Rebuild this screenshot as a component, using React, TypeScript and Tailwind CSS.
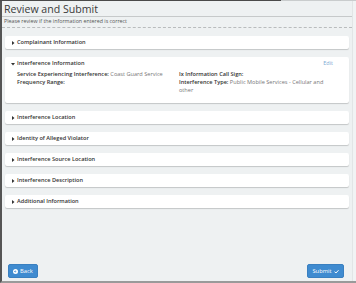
import { ReactNode } from "react";

const sections = [
  "Interference Location",
  "Identity of Alleged Violator",
  "Interference Source Location",
  "Interference Description",
  "Additional Information",
];

function Caret({ open }: { open?: boolean }) {
  return (
    <svg width="4" height="4" viewBox="0 0 4 4" className="mr-[2px] shrink-0">
      {open ? (
        <polygon points="0,1 4,1 2,3.5" fill="#333" />
      ) : (
        <polygon points="1,0 3.5,2 1,4" fill="#333" />
      )}
    </svg>
  );
}

function Card({ title, open, children }: { title: string; open?: boolean; children?: ReactNode }) {
  return (
    <div className="bg-white rounded-[2px] shadow-[0_1px_1px_rgba(0,0,0,0.18)]">
      <div className="h-[13px] flex items-center pl-[6px] pr-[16px]">
        <Caret open={open} />
        <span className="font-semibold text-[#333]">{title}</span>
        {open && <span className="ml-auto text-[#7ea9d4] text-[5.5px]">Edit</span>}
      </div>
      {children}
    </div>
  );
}

function Field({ label, value }: { label: string; value?: string }) {
  return (
    <p className="leading-[8px]">
      <span className="font-semibold text-[#333]">{label}</span>
      {value && <span className="text-[#777]"> {value}</span>}
    </p>
  );
}

export default function App() {
  return (
    <div
      className="w-[356px] h-[283px] bg-[#eef1f2] flex flex-col text-[5.6px] text-[#333] overflow-hidden"
      style={{ fontFamily: '"Open Sans", "Liberation Sans", sans-serif' }}
    >
      <div className="flex h-px shrink-0">
        <div className="w-[281px] bg-[#4a4a4a]" />
        <div className="flex-1 bg-[#c9cccd]" />
      </div>
      <div className="flex-1 flex border-l-2 border-[#555] border-b-2 border-b-[#9a9a9a]">
        <div className="w-[350px] flex flex-col">
          <div className="pl-[2px] pt-[1px] h-[16px] border-b border-[#c6c9ca]">
            <h1 className="text-[10.6px] leading-[14px] text-[#3a3a3a]">Review and Submit</h1>
          </div>
          <div className="pl-[2px] h-[11px] border-b border-dashed border-[#b9bcbd] flex items-center text-[5.3px] text-[#555]">
            Please review if the information entered is correct
          </div>
          <div className="flex flex-col gap-2 px-[3px] pt-[8px]">
            <Card title="Complainant Information" />
            <Card title="Interference Information" open>
              <div className="grid grid-cols-2 pl-[12px] pr-[16px] pb-[9px] gap-x-[8px]">
                <div>
                  <Field label="Service Experiencing Interference:" value="Coast Guard Service" />
                  <Field label="Frequency Range:" />
                </div>
                <div>
                  <Field label="Ix Information Call Sign:" />
                  <Field label="Interference Type:" value="Public Mobile Services - Cellular and other" />
                </div>
              </div>
            </Card>
            {sections.map((s) => (
              <Card key={s} title={s} />
            ))}
          </div>
          <div className="mt-auto flex justify-between pl-[6px] pr-[8px] pb-[3px]">
            <button className="h-[14px] w-[30px] rounded-[2px] bg-[#3f8bd0] border border-[#3a80c0] text-white text-[5.8px] flex items-center justify-center gap-[2px]">
              <svg width="5" height="5" viewBox="0 0 10 10">
                <circle cx="5" cy="5" r="5" fill="white" />
                <path d="M6.5 5H3.2M4.8 3.2L3 5l1.8 1.8" stroke="#3f8bd0" strokeWidth="1.4" fill="none" />
              </svg>
              Back
            </button>
            <button className="h-[14px] w-[37px] rounded-[2px] bg-[#3f8bd0] border border-[#3a80c0] text-white text-[5.8px] flex items-center justify-center gap-[2px]">
              Submit
              <svg width="5" height="5" viewBox="0 0 10 10">
                <path d="M1 5.2l2.8 2.8L9 2.5" stroke="white" strokeWidth="2" fill="none" />
              </svg>
            </button>
          </div>
        </div>
        <div className="flex-1 border-l border-[#e2e5e6] bg-[#f1f3f4]" />
      </div>
    </div>
  );
}
